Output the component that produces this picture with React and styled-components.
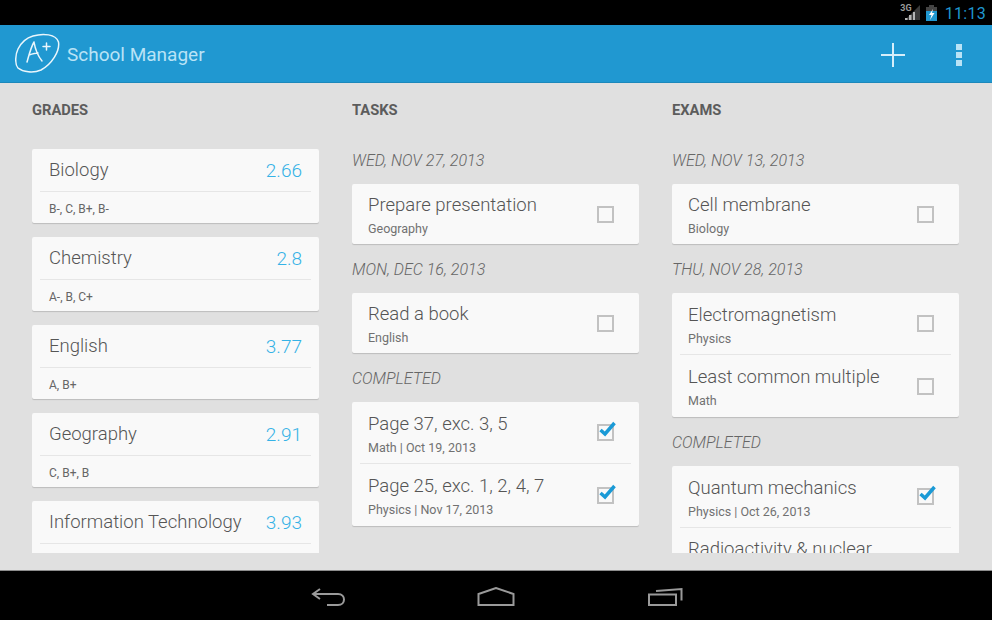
import React from 'react';
import styled, { createGlobalStyle } from 'styled-components';

const GlobalStyle = createGlobalStyle`
    html, body {
        margin: 0;
        padding: 0;
        background: #000;
    }

    body {
        font-family: Roboto, "Liberation Sans", sans-serif;
    }
`;

const Screen = styled.div`
    width: 992px;
    height: 620px;
    display: flex;
    flex-direction: column;
    overflow: hidden;
`;

const StatusBar = styled.div`
    height: 25px;
    flex: none;
    background: #000;
    display: flex;
    align-items: center;
    justify-content: flex-end;
    padding-right: 6px;
    box-sizing: border-box;
`;

const NetworkType = styled.span`
    font-size: 9px;
    font-weight: 700;
    line-height: 9px;
    color: #9a9a9a;
    margin-right: -8px;
    align-self: flex-start;
    margin-top: 4px;
`;

const Clock = styled.span`
    font-size: 16px;
    letter-spacing: 0.3px;
    color: #1f97cf;
    margin-left: 8px;
    margin-top: 2px;
`;

const ActionBar = styled.header`
    height: 58px;
    flex: none;
    box-sizing: border-box;
    background: #2098d1;
    border-bottom: 1px solid #1c88bb;
    display: flex;
    align-items: center;
    padding: 0 30px 0 15px;
`;

const AppTitle = styled.h1`
    flex: 1;
    margin: 2px 0 0 7px;
    font-size: 19px;
    font-weight: 400;
    color: #b9e3f6;
`;

const ActionIcons = styled.div`
    display: flex;
    align-items: center;
    gap: 50px;
    margin-top: 2px;
`;

const Content = styled.main`
    flex: 1;
    min-height: 0;
    background: #e0e0e0;
    display: grid;
    grid-template-columns: repeat(3, 287px);
    column-gap: 33px;
    padding: 0 33px 17px 32px;
`;

const Column = styled.section`
    min-height: 0;
    overflow: hidden;
    display: flex;
    flex-direction: column;
`;

const ColumnTitle = styled.h2`
    margin: 0;
    height: 52px;
    flex: none;
    line-height: 55px;
    font-size: 14.7px;
    font-weight: 700;
    color: #5c5c5c;
`;

const GradeList = styled.div`
    display: flex;
    flex-direction: column;
    gap: 14px;
    padding-top: 14px;
`;

const DateLabel = styled.div`
    height: 49px;
    flex: none;
    box-sizing: border-box;
    padding-top: 3px;
    line-height: 46px;
    font-size: 16px;
    font-style: italic;
    font-weight: 300;
    color: #666;
`;

const Card = styled.div`
    flex: none;
    background: #f9f9f9;
    border-radius: 2px;
    box-shadow: 0 1px 1px rgba(0, 0, 0, 0.16);
`;

const GradeHead = styled.div`
    height: 42px;
    margin: 0 8px;
    padding: 0 9px;
    display: flex;
    align-items: center;
    justify-content: space-between;
    border-bottom: 1px solid #e6e6e6;
`;

const ItemName = styled.span`
    font-size: 18.5px;
    font-weight: 300;
    color: #555;
`;

const Average = styled.span`
    font-size: 19px;
    font-weight: 300;
    color: #35b2e6;
`;

const GradeMarks = styled.div`
    height: 31px;
    line-height: 34px;
    padding: 0 17px;
    font-size: 12px;
    color: #666;
`;

const Row = styled.div`
    height: ${(p) => (p.$tall ? 62 : 60)}px;
    box-sizing: border-box;
    margin: 0 8px;
    padding: ${(p) => (p.$clipped ? '10px 9px 0 8px' : '0 9px 0 8px')};
    display: flex;
    align-items: ${(p) => (p.$clipped ? 'flex-start' : 'center')};
    justify-content: space-between;
    border-bottom: ${(p) => (p.$divider ? '1px solid #e6e6e6' : 'none')};
`;

const RowText = styled.div`
    display: flex;
    flex-direction: column;
    gap: 5px;
    min-width: 0;
    margin-top: 2px;
`;

const RowSub = styled.span`
    font-size: 12.5px;
    color: #717171;
`;

const CheckWrap = styled.div`
    width: 17px;
    height: 17px;
    margin-right: 8px;
    position: relative;
    box-sizing: border-box;
    border: 2px solid #c2c2c2;
    flex: none;
`;

const CheckMark = styled.svg`
    position: absolute;
    left: -1px;
    top: -6px;
`;

const NavBar = styled.nav`
    height: 50px;
    flex: none;
    box-sizing: border-box;
    background: #000;
    border-top: 1px solid #8c8c8c;
    display: flex;
    align-items: center;
    justify-content: center;
    gap: 132px;
    padding-top: 2px;
`;

function Logo() {
    return (
        <svg width="45" height="41" viewBox="0 0 45 41" fill="none" stroke="#eaf6fc" strokeWidth="1.5" strokeLinecap="round" strokeLinejoin="round">
            <path d="M18 3C28 0 41 1 43.500 9C45 18 37 31 26 37C18 40.500 8 39 3 35C-0.500 31 0.500 21 3 16C6 10 11 5 18 3Z" />
            <path d="M12 29C14 22 16 14 19 9C20 15 23 23 27 28M14 22C17 21 20 20 23 20" />
            <path d="M28 13.500H35M31.500 10V17" />
        </svg>
    );
}

function Signal() {
    return (
        <svg width="17" height="17" viewBox="0 0 17 17">
            <path d="M16 1V16H1Z" fill="#3a3a3a" />
            <path d="M1 16H3.500V14H1ZM5 16H7.500V11H5ZM9 16H11V8H9Z" fill="#b5b5b5" />
        </svg>
    );
}

function Battery() {
    return (
        <svg width="11" height="16" viewBox="0 0 11 16" style={{ marginLeft: 5, marginTop: 1 }}>
            <rect x="3" y="0" width="5" height="2" fill="#444" />
            <rect x="0" y="2" width="11" height="4" fill="#444" />
            <rect x="0" y="6" width="11" height="10" fill="#2098d1" />
            <path d="M7 4L3 10H5.500L4 15L8.500 8H6Z" fill="#fff" />
        </svg>
    );
}

function PlusIcon() {
    return (
        <svg width="26" height="26" viewBox="0 0 26 26" stroke="#d6eefa" strokeWidth="2">
            <path d="M13 1V25M1 13H25" />
        </svg>
    );
}

function MenuIcon() {
    return (
        <svg width="6" height="22" viewBox="0 0 6 22" fill="#b9e3f6">
            <rect width="6" height="6" />
            <rect y="8" width="6" height="6" />
            <rect y="16" width="6" height="6" />
        </svg>
    );
}

function BackIcon() {
    return (
        <svg width="36" height="20" viewBox="-2 0 36 20" fill="none" stroke="#9a9a9a" strokeWidth="2">
            <path d="M9 2L2 7L9 12M2 7H27C35 7 35 18 27 18H16" />
        </svg>
    );
}

function HomeIcon() {
    return (
        <svg width="38" height="20" viewBox="0 0 38 20" fill="none" stroke="#9a9a9a" strokeWidth="2">
            <path d="M1.500 18V7L19 1L36.500 7V18Z" />
        </svg>
    );
}

function RecentIcon() {
    return (
        <svg width="36" height="20" viewBox="0 0 36 20" fill="none" stroke="#9a9a9a" strokeWidth="2">
            <path d="M2 7.500H29V18H2Z" />
            <path d="M9 4L34.500 2V13.500" />
        </svg>
    );
}

function Checkbox({ checked }) {
    return (
        <CheckWrap>
            {checked && (
                <CheckMark width="20" height="18" viewBox="0 0 20 18">
                    <path d="M2.500 10L7 14L16.500 3" fill="none" stroke="#1a9ad6" strokeWidth="3.500" />
                </CheckMark>
            )}
        </CheckWrap>
    );
}

function ItemRow({ title, sub, checked, tall, divider }) {
    // the last exam runs past the bottom of the list, only its title shows
    if (!sub) {
        return (
            <Row $tall={tall} $clipped>
                <ItemName>{title}</ItemName>
            </Row>
        );
    }
    return (
        <Row $tall={tall} $divider={divider}>
            <RowText>
                <ItemName>{title}</ItemName>
                <RowSub>{sub}</RowSub>
            </RowText>
            <Checkbox checked={checked} />
        </Row>
    );
}

const grades = [
    { name: 'Biology', avg: '2.66', marks: 'B-, C, B+, B-' },
    { name: 'Chemistry', avg: '2.8', marks: 'A-, B, C+' },
    { name: 'English', avg: '3.77', marks: 'A, B+' },
    { name: 'Geography', avg: '2.91', marks: 'C, B+, B' },
    { name: 'Information Technology', avg: '3.93', marks: '' },
];

const tasks = [
    { date: 'WED, NOV 27, 2013', items: [{ title: 'Prepare presentation', sub: 'Geography' }] },
    { date: 'MON, DEC 16, 2013', items: [{ title: 'Read a book', sub: 'English' }] },
    {
        date: 'COMPLETED',
        items: [
            { title: 'Page 37, exc. 3, 5', sub: 'Math | Oct 19, 2013', checked: true },
            { title: 'Page 25, exc. 1, 2, 4, 7', sub: 'Physics | Nov 17, 2013', checked: true },
        ],
    },
];

const exams = [
    { date: 'WED, NOV 13, 2013', items: [{ title: 'Cell membrane', sub: 'Biology' }] },
    {
        date: 'THU, NOV 28, 2013',
        items: [
            { title: 'Electromagnetism', sub: 'Physics' },
            { title: 'Least common multiple', sub: 'Math' },
        ],
    },
    {
        date: 'COMPLETED',
        items: [
            { title: 'Quantum mechanics', sub: 'Physics | Oct 26, 2013', checked: true },
            { title: 'Radioactivity & nuclear' },
        ],
    },
];

function DatedColumn({ title, groups }) {
    return (
        <Column>
            <ColumnTitle>{title}</ColumnTitle>
            {groups.map((group) => (
                <React.Fragment key={group.date}>
                    <DateLabel>{group.date}</DateLabel>
                    <Card>
                        {group.items.map((item, index) => (
                            <ItemRow
                                key={item.title}
                                {...item}
                                tall={group.items.length > 1}
                                divider={index < group.items.length - 1}
                            />
                        ))}
                    </Card>
                </React.Fragment>
            ))}
        </Column>
    );
}

export default function App() {
    return (
        <Screen>
            <GlobalStyle />
            <StatusBar>
                <NetworkType>3G</NetworkType>
                <Signal />
                <Battery />
                <Clock>11:13</Clock>
            </StatusBar>
            <ActionBar>
                <Logo />
                <AppTitle>School Manager</AppTitle>
                <ActionIcons>
                    <PlusIcon />
                    <MenuIcon />
                </ActionIcons>
            </ActionBar>
            <Content>
                <Column>
                    <ColumnTitle>GRADES</ColumnTitle>
                    <GradeList>
                        {grades.map((grade) => (
                            <Card key={grade.name}>
                                <GradeHead>
                                    <ItemName>{grade.name}</ItemName>
                                    <Average>{grade.avg}</Average>
                                </GradeHead>
                                <GradeMarks>{grade.marks}</GradeMarks>
                            </Card>
                        ))}
                    </GradeList>
                </Column>
                <DatedColumn title="TASKS" groups={tasks} />
                <DatedColumn title="EXAMS" groups={exams} />
            </Content>
            <NavBar>
                <BackIcon />
                <HomeIcon />
                <RecentIcon />
            </NavBar>
        </Screen>
    );
}
